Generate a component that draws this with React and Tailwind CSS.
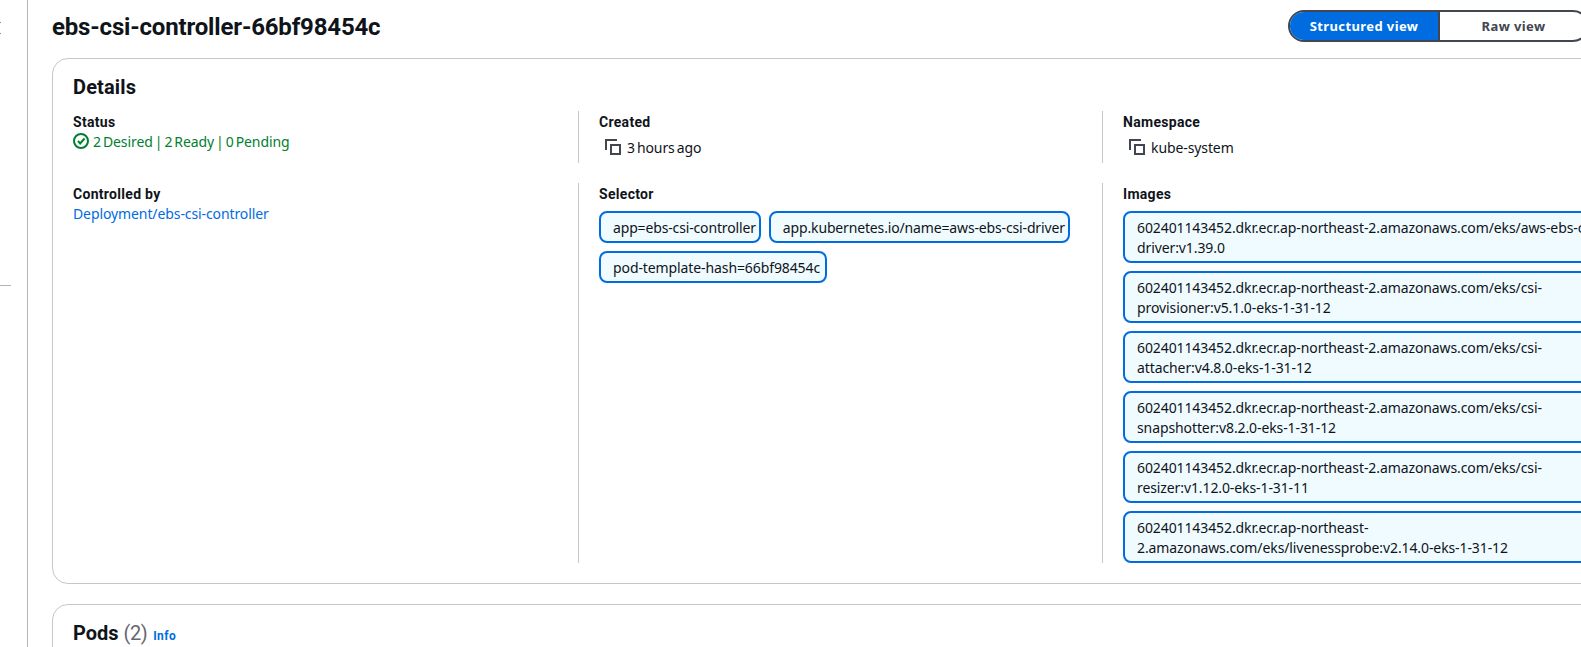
import React from "react";

const chips = [
  { text: "app=ebs-csi-controller", cls: "pr-[3px] tracking-[-0.15px]" },
  { text: "app.kubernetes.io/name=aws-ebs-csi-driver", cls: "pr-[3px] tracking-[-0.15px]" },
  { text: "pod-template-hash=66bf98454c", cls: "pr-[5px] tracking-[-0.1px]" },
];

const repo = "602401143452.dkr.ecr.ap-northeast-2.amazonaws.com/eks/";
const images = [
  repo + "aws-ebs-csi-driver:v1.39.0",
  repo + "csi-provisioner:v5.1.0-eks-1-31-12",
  repo + "csi-attacher:v4.8.0-eks-1-31-12",
  repo + "csi-snapshotter:v8.2.0-eks-1-31-12",
  repo + "csi-resizer:v1.12.0-eks-1-31-11",
  repo + "livenessprobe:v2.14.0-eks-1-31-12",
];

function CopyIcon() {
  return (
    <svg width="16" height="16" viewBox="0 0 16 16" fill="none" stroke="#424650" strokeWidth="2" className="shrink-0">
      <path d="M1 11V1h11" />
      <rect x="6" y="6" width="9" height="9" />
    </svg>
  );
}

function CopyValue({ children }) {
  return (
    <div className="flex items-center gap-[6px] pl-[6px] h-[32px]">
      <CopyIcon />
      <span className="mt-[2px]">{children}</span>
    </div>
  );
}

function Label({ children }) {
  return <div className="h-[20px] pt-[1px] font-bold font-['Roboto',sans-serif] tracking-[0.3px] [word-spacing:0px]">{children}</div>;
}

function Column({ first, width, children }) {
  if (first) return <div className="w-[505px] shrink-0">{children}</div>;
  return (
    <div className={width === "narrow" ? "w-[524px] shrink-0 border-l border-[#c6c6cd] pl-[20px]" : "w-[526px] shrink-0 border-l border-[#c6c6cd] pl-[20px]"}>
      {children}
    </div>
  );
}

export default function App() {
  return (
    <div className="w-[1581px] h-[647px] overflow-hidden bg-white text-[14px] leading-[20px] tracking-[-0.1px] [word-spacing:-1.5px] text-[#0f141a] font-['Noto_Sans',sans-serif]">
      <div className="flex h-full">
        <div className="w-[27px] shrink-0 relative overflow-hidden">
          <div className="absolute left-0 top-[285px] w-[11px] h-px bg-[#b4b4bb]"></div>
          <svg className="absolute left-0 top-[21px]" width="2" height="14" viewBox="0 0 2 14" fill="none" stroke="#8c8c94" strokeWidth="1">
            <path d="M1 1l-6 6 6 6" />
          </svg>
        </div>
        <div className="w-[1px] shrink-0 bg-[#b4b4bb]"></div>
        <main className="w-[1598px] shrink-0 pl-[24px]">
          <div className="flex items-center h-[58px] w-[1598px] relative">
            <h1 className="text-[24px] leading-[30px] font-bold -mt-[4px] font-['Roboto',sans-serif] tracking-[-0.17px]">ebs-csi-controller-66bf98454c</h1>
            <div className="absolute left-[1236px] top-[10px] flex h-[32px] w-[301px] rounded-[16px] border-2 border-[#424650] overflow-hidden font-bold text-[13px] tracking-[0.4px] [word-spacing:0px]">
              <div className="w-[150px] flex items-center justify-center bg-[#006ce0] text-white border-r-2 border-[#424650]">Structured view</div>
              <div className="flex-1 flex items-center justify-center text-[#424650]">Raw view</div>
            </div>
          </div>
          <section className="w-[1598px] h-[526px] rounded-[16px] border border-[#c6c6cd] pt-[16px] pl-[20px]">
            <h2 className="text-[20px] leading-[24px] font-bold mb-[12px] font-['Roboto',sans-serif] tracking-[0.15px]">Details</h2>
            <div className="flex h-[52px]">
              <Column first>
                <Label>Status</Label>
                <div className="flex items-center gap-[4px] h-[20px] text-[#00802f]">
                  <svg width="16" height="16" viewBox="0 0 16 16" fill="none" stroke="#00802f" strokeWidth="2">
                    <circle cx="8" cy="8" r="7" />
                    <path d="M5 8l2.2 2.5L11.5 5.5" />
                  </svg>
                  <span className="mt-[2px]">2 Desired | 2 Ready | 0 Pending</span>
                </div>
              </Column>
              <Column width="narrow">
                <Label>Created</Label>
                <CopyValue>3 hours ago</CopyValue>
              </Column>
              <Column>
                <Label>Namespace</Label>
                <CopyValue>kube-system</CopyValue>
              </Column>
            </div>
            <div className="flex h-[380px] mt-[20px]">
              <Column first>
                <Label>Controlled by</Label>
                <div className="h-[20px] pt-[1px] text-[#006ce0]">Deployment/ebs-csi-controller</div>
              </Column>
              <Column width="narrow">
                <Label>Selector</Label>
                <div className="flex flex-wrap gap-[8px] mt-[8px]">
                  {chips.map((c) => (
                    <div key={c.text} className={`rounded-[8px] border-2 border-[#006ce0] bg-[#f0fbff] pl-[12px] pt-[5px] pb-[3px] ${c.cls}`}>
                      {c.text}
                    </div>
                  ))}
                </div>
              </Column>
              <Column>
                <Label>Images</Label>
                <div className="flex flex-col gap-[8px] mt-[8px]">
                  {images.map((c) => (
                    <div key={c} className="rounded-[8px] border-2 border-[#006ce0] bg-[#f0fbff] px-[12px] pt-[5px] pb-[3px]">
                      {c}
                    </div>
                  ))}
                </div>
              </Column>
            </div>
          </section>
          <section className="w-[1598px] mt-[20px] rounded-t-[16px] border border-[#c6c6cd] pt-[16px] pl-[20px] h-[100px]">
            <div className="flex items-baseline font-['Roboto',sans-serif] tracking-normal">
              <h2 className="text-[20px] leading-[24px] font-bold">Pods</h2>
              <span className="text-[20px] leading-[24px] text-[#656871] ml-[5px] tracking-[-0.5px]">(2)</span>
              <span className="text-[12px] font-bold text-[#006ce0] ml-[6px] tracking-[0.4px]">Info</span>
            </div>
          </section>
        </main>
      </div>
    </div>
  );
}
